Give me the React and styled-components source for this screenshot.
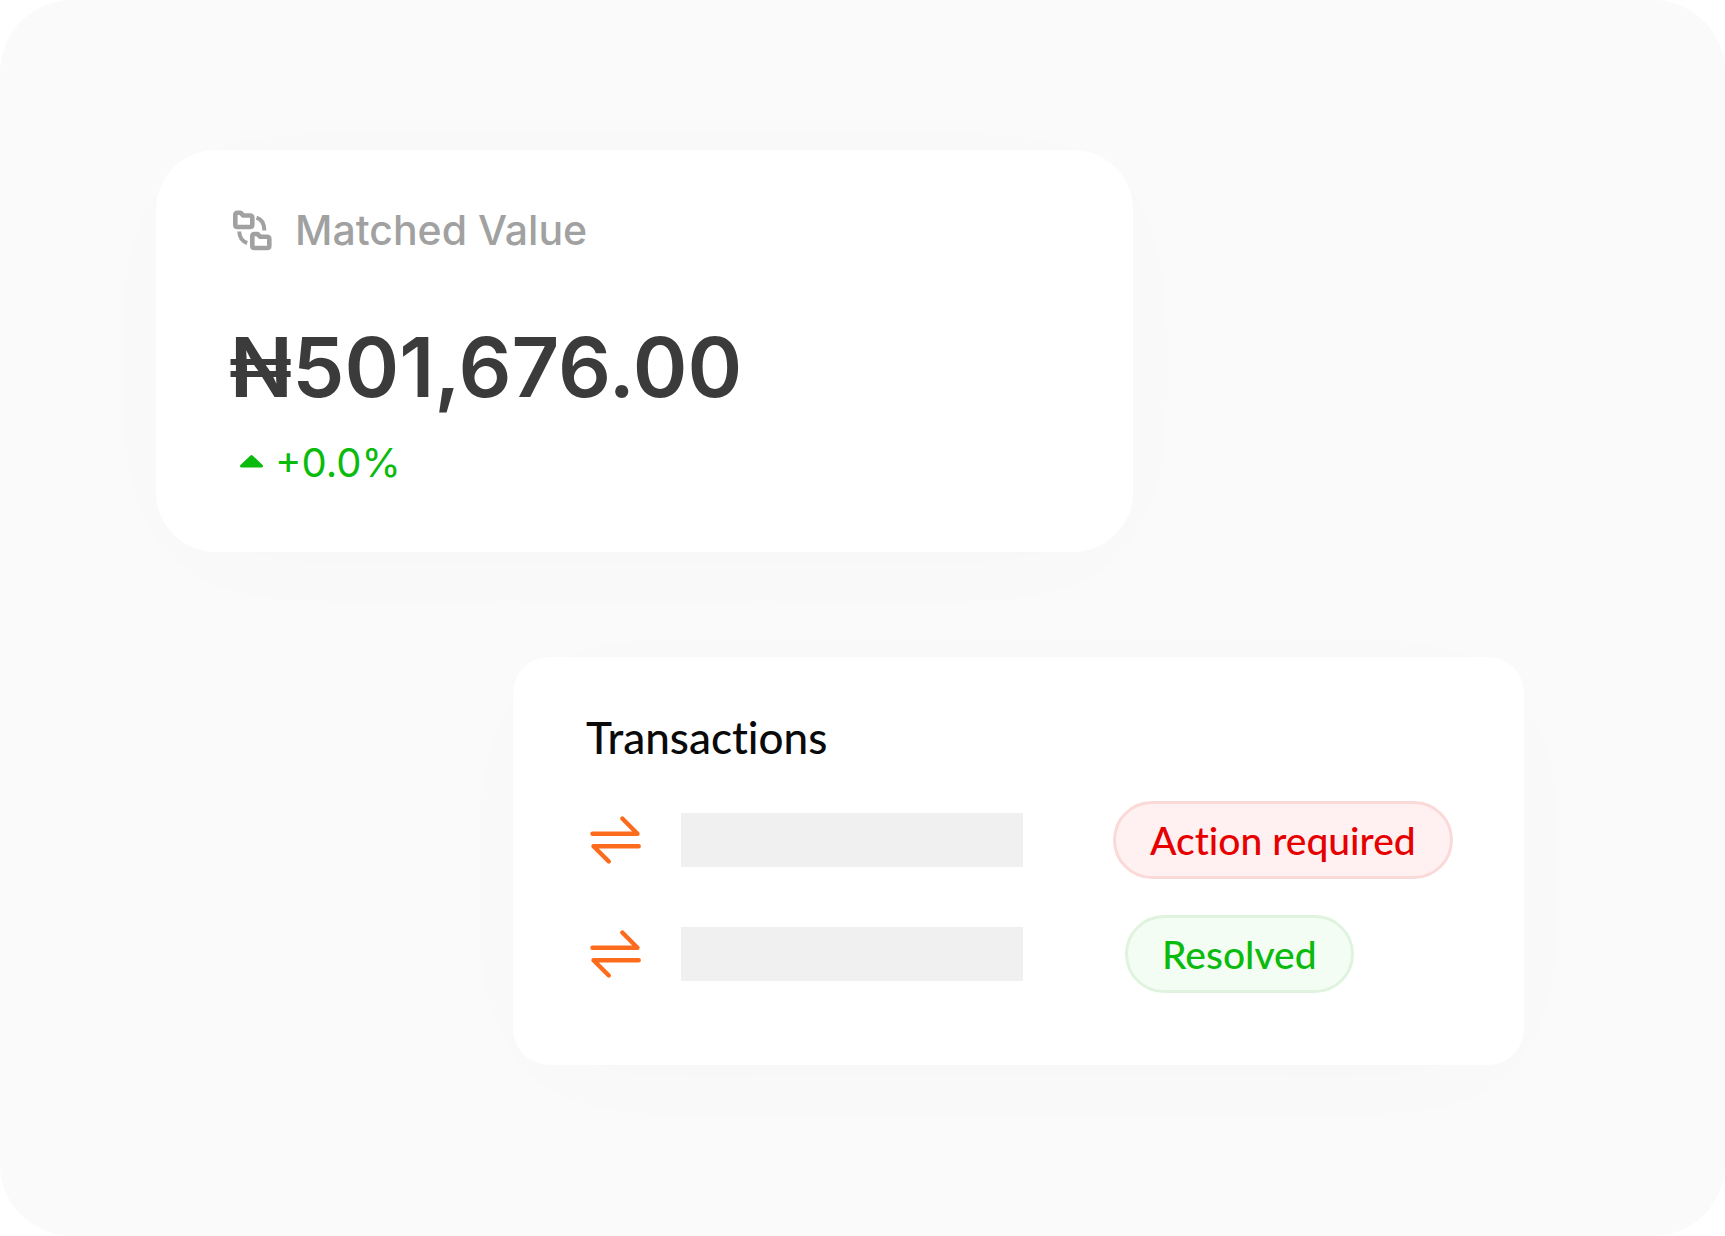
import React from 'react'
import styled, { createGlobalStyle } from 'styled-components'

const GlobalStyle = createGlobalStyle`
  *, *::before, *::after {
    box-sizing: border-box;
  }

  body {
    margin: 0;
    background: #fff;
    font-family: Inter, "Liberation Sans", sans-serif;
  }
`

const Stage = styled.main`
  min-height: 100vh;
  padding: 150px 201px 171px 156px;
  border-radius: 72px;
  background: #fafafa;
  display: flex;
  flex-direction: column;
  gap: 105px;
`

const Card = styled.section`
  width: ${props => props.$width};
  align-self: ${props => props.$align};
  padding: 56px 72px ${props => props.$bottom} 73px;
  border-radius: ${props => props.$radius};
  background: #fff;
  box-shadow: 0 16px 130px -20px rgba(0, 0, 0, .02);
`

const CardHeader = styled.header`
  display: flex;
  align-items: center;
  gap: 22px;
  margin-bottom: 65px;
`

const StatTitle = styled.h2`
  margin: 0;
  font-size: 41px;
  font-weight: 500;
  line-height: 48px;
  color: #a1a1a1;
`

const Amount = styled.p`
  margin: 0 0 24px;
  font-size: 83px;
  font-weight: 600;
  line-height: 96px;
  color: #3b3b3b;
`

const Delta = styled.p`
  margin: 0;
  display: flex;
  align-items: center;
  gap: 2px;
  font-size: 40px;
  line-height: 48px;
  color: #0abb0e;
`

const ListTitle = styled.h2`
  margin: 0 0 40px;
  font-family: Lato, "Liberation Sans", sans-serif;
  font-size: 44px;
  font-weight: 500;
  font-variant-ligatures: none;
  line-height: 48px;
  color: #0a0a0a;
`

const List = styled.ul`
  margin: 0;
  padding: 0;
  list-style: none;
  display: flex;
  flex-direction: column;
  gap: 36px;
`

const Row = styled.li`
  display: grid;
  grid-template-columns: 60px 1fr 339px;
  align-items: center;
`

const Bar = styled.div`
  height: 54px;
  margin: 0 90px 0 35px;
  background: #f0f0f0;
`

const tones = {
  danger: { text: '#e60000', fill: '#fff1f1', line: '#fad9d9' },
  success: { text: '#0abb0e', fill: '#f4fdf4', line: '#dff3df' },
}

const Badge = styled.span`
  justify-self: start;
  margin-left: ${props => props.$inset || '0'};
  padding: 12px 34px;
  border: 3px solid ${props => tones[props.$tone].line};
  border-radius: 39px;
  background: ${props => tones[props.$tone].fill};
  color: ${props => tones[props.$tone].text};
  font-family: Lato, "Liberation Sans", sans-serif;
  font-size: 39px;
  font-weight: 500;
  font-variant-ligatures: none;
  line-height: 48px;
  white-space: nowrap;
`

const FoldersIcon = () => (
  <svg width="44" height="44" viewBox="4 4 44 44" fill="none" stroke="#a1a1a1" strokeWidth="4.6" strokeLinejoin="round" aria-hidden="true">
    <path d="M10.3 11Q10.3 8.7 12.6 8.7H15.5L18.3 11.5H25Q27.3 11.5 27.3 13.8V20.7Q27.3 23 25 23H12.6Q10.3 23 10.3 20.7Z" />
    <path d="M27.3 32.3Q27.3 30 29.6 30H32.5L35.3 32.8H42Q44.3 32.8 44.3 35.1V41.7Q44.3 44 42 44H29.6Q27.3 44 27.3 41.7Z" />
    <path d="M31.5 13.7C36.5 15.2 39.3 19.9 39.4 26.5" strokeWidth="4" />
    <path d="M14.2 27.5C14.5 33 17.2 37.4 22.2 39" strokeWidth="4" />
  </svg>
)

const UpIcon = () => (
  <svg width="44" height="44" viewBox="0 0 44 44" fill="#0abb0e" stroke="#0abb0e" strokeWidth="3" strokeLinejoin="round" aria-hidden="true">
    <path d="M22.5 15.5L32.5 25H12.5Z" />
  </svg>
)

const SwapIcon = () => (
  <svg width="60" height="60" viewBox="0 0 60 60" fill="none" stroke="#fd6b1c" strokeWidth="4.4" strokeLinecap="round" strokeLinejoin="round" aria-hidden="true">
    <path d="M6.5 23.7H51.5L36.3 8.5" />
    <path d="M52.7 36.2H7.5L22.8 51.5" />
  </svg>
)

const transactions = [
  { id: 1, tone: 'danger', status: 'Action required' },
  { id: 2, tone: 'success', status: 'Resolved', inset: '12px' },
]

const App = () => (
  <>
    <GlobalStyle />
    <Stage>
      <Card $width="71.4%" $align="flex-start" $radius="60px" $bottom="65px">
        <CardHeader>
          <FoldersIcon />
          <StatTitle>Matched Value</StatTitle>
        </CardHeader>
        <Amount>₦501,676.00</Amount>
        <Delta>
          <UpIcon />
          +0.0%
        </Delta>
      </Card>
      <Card $width="73.9%" $align="flex-end" $radius="36px" $bottom="72px">
        <ListTitle>Transactions</ListTitle>
        <List>
          {transactions.map(({ id, tone, status, inset }) => (
            <Row key={id}>
              <SwapIcon />
              <Bar />
              <Badge $tone={tone} $inset={inset}>{status}</Badge>
            </Row>
          ))}
        </List>
      </Card>
    </Stage>
  </>
)

export default App
